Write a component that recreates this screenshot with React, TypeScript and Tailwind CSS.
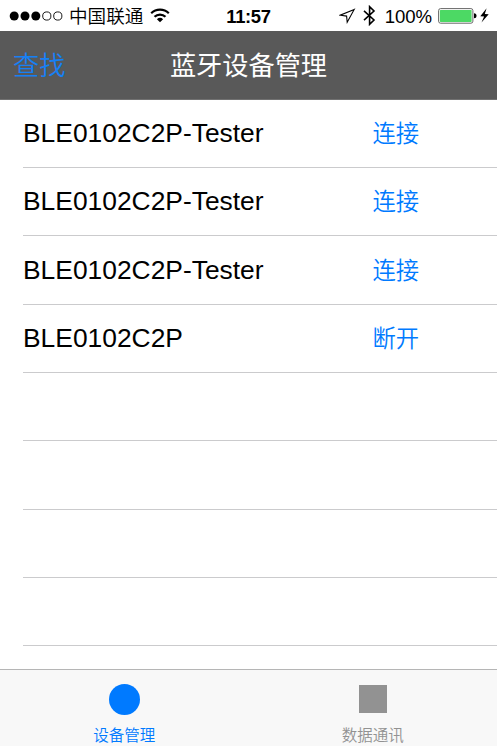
import React from 'react';

const devices = [
  { name: 'BLE0102C2P-Tester', action: '连接' },
  { name: 'BLE0102C2P-Tester', action: '连接' },
  { name: 'BLE0102C2P-Tester', action: '连接' },
  { name: 'BLE0102C2P', action: '断开' },
];

const emptyRows = [0, 1, 2, 3];

function SignalDots() {
  return (
    <svg width="54" height="10" viewBox="0 0 54 10" className="shrink-0">
      {[5.2, 16, 26.8].map((x) => (
        <circle key={x} cx={x} cy="5" r="4.5" fill="#000" />
      ))}
      {[37.8, 48.8].map((x) => (
        <circle key={x} cx={x} cy="5" r="4.1" fill="none" stroke="#000" strokeWidth="0.9" />
      ))}
    </svg>
  );
}

function WifiIcon() {
  return (
    <svg width="20" height="15" viewBox="0 0 20 15" className="shrink-0" fill="none" stroke="#000" strokeWidth="2.2">
      <path d="M1.2 5.3a12.6 12.6 0 0 1 17.6 0" />
      <path d="M4.5 8.8a7.9 7.9 0 0 1 11 0" />
      <path d="M10 14.3L6.9 11.2a4.5 4.5 0 0 1 6.2 0z" fill="#000" stroke="none" />
    </svg>
  );
}

function LocationIcon() {
  return (
    <svg width="17" height="16" viewBox="0 0 17 16" className="shrink-0" fill="none" stroke="#000" strokeWidth="1.1">
      <path d="M15.2 1.4L1.2 7.2L7.6 8.1L8.2 14.2Z" strokeLinejoin="miter" />
    </svg>
  );
}

function BluetoothIcon() {
  return (
    <svg width="13" height="21" viewBox="0 0 13 21" className="shrink-0" fill="none" stroke="#000" strokeWidth="1.6">
      <path d="M1 5.8L11 15L6.6 19.3V1.7L11 6L1 15.2" />
    </svg>
  );
}

function BatteryIcon() {
  return (
    <svg width="39" height="16" viewBox="0 0 39 16" className="shrink-0">
      <rect x="0.6" y="0.6" width="34.3" height="14.6" rx="2" fill="#fff" stroke="#666" strokeWidth="1" />
      <rect x="1.9" y="1.9" width="31.7" height="12" rx="0.7" fill="#4cd964" />
      <path d="M36 5.3a2.5 2.5 0 0 1 0 5z" fill="#000" />
    </svg>
  );
}

function ChargeIcon() {
  return (
    <svg width="9" height="15" viewBox="0 0 9 15" className="shrink-0">
      <path d="M6.6 0.3L0.3 8.2L4.1 8.4L1.5 14.5L8.7 6.2L4.8 6Z" fill="#000" />
    </svg>
  );
}

function StatusBar() {
  return (
    <header className="grid h-[31px] shrink-0 grid-cols-[1fr_auto_1fr] items-center text-[18.6px] leading-none">
      <div className="flex items-center pl-[9px]">
        <SignalDots />
        <span className="ml-[6px] pt-[3px] font-[350] whitespace-nowrap">中国联通</span>
        <span className="ml-[7px] flex"><WifiIcon /></span>
      </div>
      <span className="pt-[3px] text-[18.4px] font-bold tracking-[-0.35px]">11:57</span>
      <div className="flex items-center justify-end pr-[8px]">
        <LocationIcon />
        <span className="ml-[7px] flex"><BluetoothIcon /></span>
        <span className="ml-[9px] pt-[3px] tracking-[-0.1px]">100%</span>
        <span className="ml-[6px] flex pt-[1px]"><BatteryIcon /></span>
        <span className="ml-[3px] flex"><ChargeIcon /></span>
      </div>
    </header>
  );
}

export default function App() {
  return (
    <div className="flex h-[746px] w-[497px] flex-col overflow-hidden bg-white font-['Liberation_Sans','Noto_Sans_CJK_SC',sans-serif] text-black">
      <StatusBar />
      <nav className="grid h-[68.6px] shrink-0 grid-cols-[1fr_auto_1fr] items-center border-b border-[#717171] bg-[#595959] pt-[3px] text-[26.2px] leading-none">
        <button className="justify-self-start pl-[13px] font-[350] text-[#1680f5]">查找</button>
        <h1 className="font-normal text-white">蓝牙设备管理</h1>
        <span />
      </nav>
      <main className="min-h-0 flex-1 overflow-hidden">
        {devices.map((device, i) => (
          <div key={i} className="h-[68.35px] pl-[23px]">
            <div className="flex h-full items-center justify-between border-b border-[#cbcbcd] pr-[78px]">
              <span className="text-[26.4px] leading-none">{device.name}</span>
              <button className="pt-[3px] text-[23.3px] leading-none font-[350] text-[#007aff]">{device.action}</button>
            </div>
          </div>
        ))}
        {emptyRows.map((row) => (
          <div key={row} className="h-[68.35px] pl-[23px]">
            <div className="h-full border-b border-[#cbcbcd]" />
          </div>
        ))}
      </main>
      <footer className="grid h-[77px] shrink-0 grid-cols-2 border-t border-[#b5b5b5] bg-[#f8f8f8] text-[15.5px] leading-none">
        <button className="flex flex-col items-center pt-[14px] font-[350] text-[#007aff]">
          <span className="size-[31px] rounded-full bg-[#007aff]" />
          <span className="mt-[13px]">设备管理</span>
        </button>
        <button className="flex flex-col items-center pt-[15px] font-[350] text-[#929292]">
          <span className="size-[28px] bg-[#929292]" />
          <span className="mt-[15px]">数据通讯</span>
        </button>
      </footer>
    </div>
  );
}
